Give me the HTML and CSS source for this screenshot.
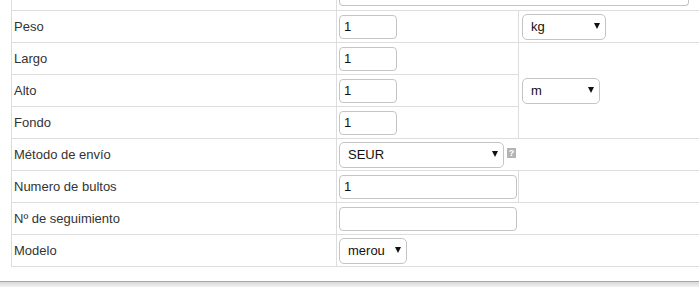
FILE: index.html
```html
<!DOCTYPE html>
<html>
<head>
<meta charset="UTF-8">
<link rel="stylesheet" href="styles.css">
</head>
<body>
<div class="page">
<table class="form_table">
	<colgroup>
		<col class="col_label">
		<col class="col_value">
		<col class="col_unit">
	</colgroup>
	<tr class="cut_row">
		<td></td>
		<td colspan="2"><div class="input_stub"></div></td>
	</tr>
	<tr>
		<td class="label">Peso</td>
		<td><input class="field short" type="text" value="1"></td>
		<td><div class="select sel_kg"><span>kg</span><span class="arrow"></span></div></td>
	</tr>
	<tr>
		<td class="label">Largo</td>
		<td><input class="field short" type="text" value="1"></td>
		<td rowspan="3"><div class="select sel_m"><span>m</span><span class="arrow"></span></div></td>
	</tr>
	<tr>
		<td class="label">Alto</td>
		<td><input class="field short" type="text" value="1"></td>
	</tr>
	<tr>
		<td class="label">Fondo</td>
		<td><input class="field short" type="text" value="1"></td>
	</tr>
	<tr>
		<td class="label">Método de envío</td>
		<td colspan="2">
			<div class="with_help">
				<div class="select sel_ship"><span>SEUR</span><span class="arrow"></span></div>
				<span class="help">?</span>
			</div>
		</td>
	</tr>
	<tr>
		<td class="label">Numero de bultos</td>
		<td><input class="field wide" type="text" value="1"></td>
		<td></td>
	</tr>
	<tr>
		<td class="label">Nº de seguimiento</td>
		<td colspan="2"><input class="field wide" type="text" value=""></td>
	</tr>
	<tr>
		<td class="label">Modelo</td>
		<td colspan="2"><div class="select sel_model"><span>merou</span><span class="arrow"></span></div></td>
	</tr>
</table>
<div class="footer_bar"></div>
</div>
</body>
</html>
```

FILE: styles.css
```css
body { margin:0; background:#fff; overflow:hidden; font-family:"Liberation Sans", Arial, sans-serif; font-size:13px; color:#333; }
.page { padding:0 0 0 11px; }

.form_table { border-collapse:collapse; width:700px; table-layout:fixed; font-size:13px; }
.form_table .col_label { width:325px; }
.form_table .col_value { width:182px; }
.form_table td { border:1px solid #ddd; border-right:none; padding:0 2px; height:31px; vertical-align:middle; }
.form_table td + td { border-left:1px solid #ddd; }
.form_table td.label { padding-left:2px; }
.form_table .cut_row td { border-top:none; height:6px; padding:0 2px 4px 2px; vertical-align:bottom; }

.input_stub { width:348px; height:5px; border:1px solid #c4c4c4; border-top:none; border-radius:0 0 4px 4px; }

.field { box-sizing:border-box; display:block; height:24px; border:1px solid #c4c4c4; border-radius:4px; padding:0 4px; font-family:"Liberation Sans", Arial, sans-serif; font-size:13px; color:#111; background:#fff; outline:none; }
.field.short { width:58px; }
.field.wide { width:178px; }

.select { box-sizing:border-box; display:flex; align-items:center; justify-content:space-between; height:26px; border:1px solid #c4c4c4; border-radius:5px; padding:0 5px 0 8px; background:#fff; color:#111; }
.select .arrow { width:0; height:0; border-left:3px solid transparent; border-right:3px solid transparent; border-top:6px solid #111; margin-top:-1px; }
.sel_kg { width:84px; margin-left:1px; }
.sel_m { width:78px; margin-left:1px; }
.sel_ship { width:165px; }
.sel_model { width:68px; }

.with_help { display:flex; align-items:center; gap:3px; }
.help { display:flex; align-items:center; justify-content:center; width:9px; height:10px; margin-top:-4px; background:#b4b4b4; color:#fff; font-size:9px; font-weight:bold; line-height:10px; }

.footer_bar { margin:14px 0 0 -11px; height:5px; border-top:1px solid #a8a8a8; background:linear-gradient(#d8d8d8, #f2f2f2); }
```
